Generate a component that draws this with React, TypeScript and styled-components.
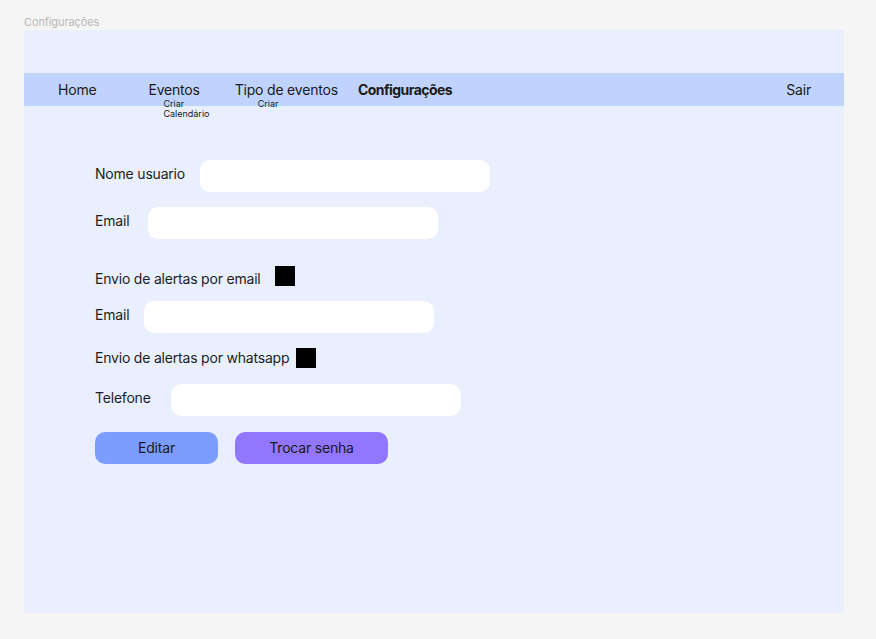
import styled, { createGlobalStyle } from 'styled-components'

const GlobalStyle = createGlobalStyle`
  html, body {
    margin: 0;
    padding: 0;
    background: #f5f5f5;
    font-family: Inter, "Noto Sans", sans-serif;
  }
`

const Canvas = styled.div`
  padding: 15px 32px 26px 24px;
  display: flex;
  flex-direction: column;
`

const FrameTitle = styled.div`
  font-size: 11px;
  line-height: 14px;
  color: #b8b8b8;
  letter-spacing: -0.1px;
  margin-bottom: 1px;
`

const Frame = styled.div`
  width: 820px;
  height: 583px;
  background: #e9effc;
  padding-top: 43px;
  box-sizing: border-box;
`

const NavBar = styled.nav`
  height: 33px;
  background: #bfd3fc;
  display: flex;
  align-items: center;
  padding: 0 33px 1px 34px;
  box-sizing: border-box;
`

const NavItem = styled.div<{ $left?: number; $bold?: boolean; $push?: boolean }>`
  position: relative;
  margin-left: ${p => (p.$push ? 'auto' : `${p.$left ?? 0}px`)};
  font-size: 14px;
  line-height: 17px;
  color: #1a1a1a;
  font-weight: ${p => (p.$bold ? 700 : 400)};
  letter-spacing: ${p => (p.$bold ? '-0.55px' : '-0.2px')};
  cursor: pointer;
`

const SubMenu = styled.div<{ $offset: number }>`
  position: absolute;
  top: 18px;
  left: ${p => p.$offset}px;
  display: flex;
  flex-direction: column;
  font-size: 9px;
  line-height: 10px;
  font-weight: 400;
  letter-spacing: 0;
  color: #1a1a1a;
  white-space: nowrap;
`

const Form = styled.div`
  padding: 54px 0 0 71px;
  display: flex;
  flex-direction: column;
  gap: 15px;
`

const Row = styled.div<{ $gap: number; $top?: number }>`
  display: flex;
  align-items: center;
  gap: ${p => p.$gap}px;
  margin-top: ${p => p.$top ?? 0}px;
`

const Label = styled.span<{ $check?: boolean; $shift?: number }>`
  font-size: 14px;
  line-height: 17px;
  letter-spacing: -0.2px;
  color: #1e1e1e;
  padding-bottom: ${p => (p.$check ? 0 : 5)}px;
  margin: ${p => `${p.$shift ?? 0}px 0 ${-(p.$shift ?? 0)}px`};
`

const Input = styled.input`
  width: 290px;
  height: 32px;
  border: none;
  border-radius: 10px;
  background: #ffffff;
  outline: none;
  padding: 0 10px;
  box-sizing: border-box;
  font-family: inherit;
`

const Check = styled.span`
  width: 20px;
  height: 20px;
  background: #000;
  display: inline-block;
`

const Buttons = styled.div`
  display: flex;
  gap: 17px;
  margin-top: 1px;
`

const Button = styled.button<{ $bg: string; $w: number }>`
  width: ${p => p.$w}px;
  height: 32px;
  border: none;
  border-radius: 10px;
  background: ${p => p.$bg};
  font-family: inherit;
  font-size: 14px;
  letter-spacing: -0.2px;
  color: #1a1a1a;
  cursor: pointer;
  padding: 0 0 1px;
`

export default function App() {
  return (
    <>
      <GlobalStyle />
      <Canvas>
        <FrameTitle>Configurações</FrameTitle>
        <Frame>
          <NavBar>
            <NavItem>Home</NavItem>
            <NavItem $left={52}>
              Eventos
              <SubMenu $offset={15}>
                <span>Criar</span>
                <span>Calendário</span>
              </SubMenu>
            </NavItem>
            <NavItem $left={35}>
              Tipo de eventos
              <SubMenu $offset={23}>
                <span>Criar</span>
              </SubMenu>
            </NavItem>
            <NavItem $left={20} $bold>Configurações</NavItem>
            <NavItem $push>Sair</NavItem>
          </NavBar>
          <Form>
            <Row $gap={15}>
              <Label>Nome usuario</Label>
              <Input />
            </Row>
            <Row $gap={19}>
              <Label>Email</Label>
              <Input />
            </Row>
            <Row $gap={14} $top={12}>
              <Label $check $shift={2}>Envio de alertas por email</Label>
              <Check />
            </Row>
            <Row $gap={15}>
              <Label>Email</Label>
              <Input />
            </Row>
            <Row $gap={7}>
              <Label $check $shift={-1}>Envio de alertas por whatsapp</Label>
              <Check />
            </Row>
            <Row $gap={20} $top={1}>
              <Label>Telefone</Label>
              <Input />
            </Row>
            <Buttons>
              <Button $bg="#7b9dff" $w={123}>Editar</Button>
              <Button $bg="#9176ff" $w={153}>Trocar senha</Button>
            </Buttons>
          </Form>
        </Frame>
      </Canvas>
    </>
  )
}
